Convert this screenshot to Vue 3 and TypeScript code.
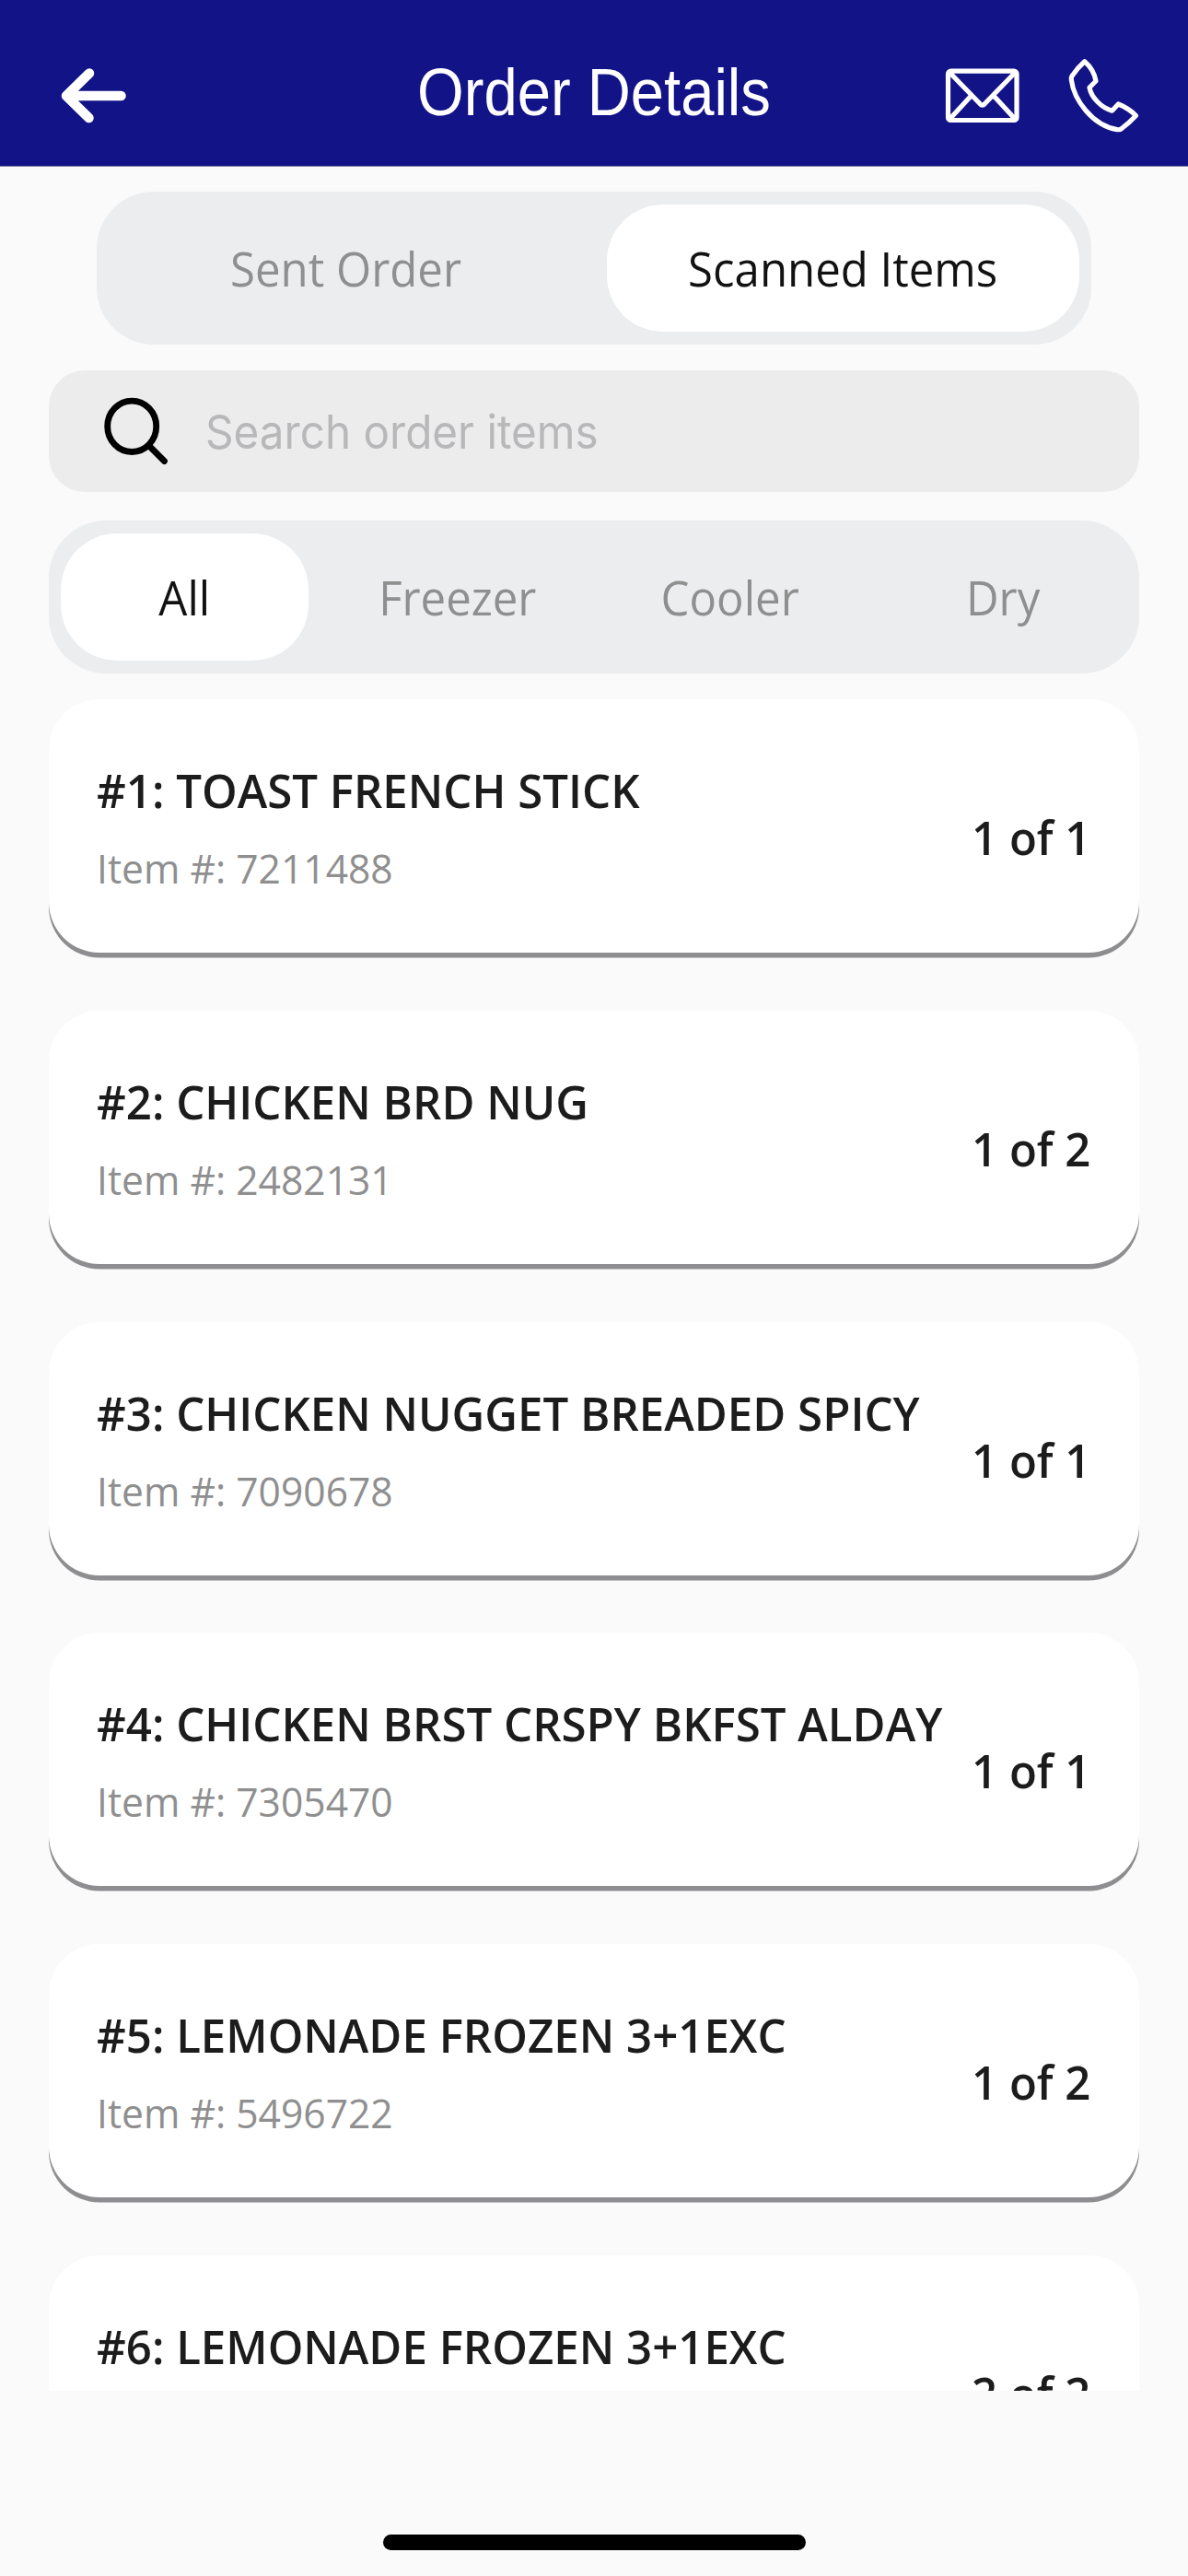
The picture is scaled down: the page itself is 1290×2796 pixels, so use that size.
<script setup lang="ts">
import { ref } from 'vue'

interface OrderItem {
  id: number
  name: string
  sku?: string
  scanned: number
  total: number
}

const views = ['Sent Order', 'Scanned Items']
const activeView = ref('Scanned Items')

const filters = ['All', 'Freezer', 'Cooler', 'Dry']
const activeFilter = ref('All')

const items: OrderItem[] = [
  { id: 1, name: 'TOAST FRENCH STICK', sku: '7211488', scanned: 1, total: 1 },
  { id: 2, name: 'CHICKEN BRD NUG', sku: '2482131', scanned: 1, total: 2 },
  { id: 3, name: 'CHICKEN NUGGET BREADED SPICY', sku: '7090678', scanned: 1, total: 1 },
  { id: 4, name: 'CHICKEN BRST CRSPY BKFST ALDAY', sku: '7305470', scanned: 1, total: 1 },
  { id: 5, name: 'LEMONADE FROZEN 3+1EXC', sku: '5496722', scanned: 1, total: 2 },
  { id: 6, name: 'LEMONADE FROZEN 3+1EXC', scanned: 2, total: 2 },
]
</script>

<template>
  <div class="screen">
    <header class="header">
      <svg class="back" width="80" height="70" viewBox="60 69 80 70">
        <path d="M131.5 104H72M97 79.500L72 104L96.500 128" />
      </svg>
      <h1 class="title">Order Details</h1>
      <div class="actions">
        <svg class="icon" width="84" height="90" viewBox="1025 59 84 90">
          <rect x="1029.500" y="77.200" width="74.500" height="53.300" rx="3" />
          <path d="M1030.500 78L1064 112.500Q1066.700 115.800 1069.400 112.500L1103 78M1031 129.500L1054.500 104M1102.500 129.500L1079 104" />
        </svg>
        <svg class="icon" width="80" height="90" viewBox="1158 59 80 90">
          <path d="M1177.700 66.700Q1170 73.500 1164 82.500Q1163 84 1163.400 87C1166 108 1186 136 1213 140.600Q1216 141.200 1218 139.500Q1226 133.500 1233.500 125.500C1228 120 1222 116 1214.300 113L1207.500 120.200C1196 117 1185 106 1183 95L1190 88C1188.500 79.500 1184 72 1177.700 66.700Z" />
        </svg>
      </div>
    </header>

    <nav class="segment views">
      <button
        v-for="view in views"
        :key="view"
        class="tab"
        :class="{ active: view === activeView }"
        @click="activeView = view"
      ><span class="label">{{ view }}</span></button>
    </nav>

    <div class="search">
      <svg width="80" height="80" viewBox="107 428 80 80">
        <ellipse cx="143.200" cy="462.800" rx="26.500" ry="27.700" />
        <path d="M163 485L178.500 500.500" />
      </svg>
      <span class="placeholder">Search order items</span>
    </div>

    <nav class="segment filters">
      <button
        v-for="filter in filters"
        :key="filter"
        class="tab"
        :class="{ active: filter === activeFilter }"
        @click="activeFilter = filter"
      ><span class="label">{{ filter }}</span></button>
    </nav>

    <main class="list">
      <article v-for="item in items" :key="item.id" class="card">
        <div class="info">
          <div class="name">#{{ item.id }}: {{ item.name }}</div>
          <div v-if="item.sku" class="sku">Item #: {{ item.sku }}</div>
        </div>
        <div class="qty">{{ item.scanned }} of {{ item.total }}</div>
      </article>
    </main>

    <footer class="footer"><div class="home"></div></footer>
  </div>
</template>

<style>
body {
  background: #fafafa;
}
</style>

<style scoped>
.screen {
  display: flex;
  flex-direction: column;
  width: 1290px;
  height: 2796px;
  overflow: hidden;
  background: #fafafa;
  font-family: 'Open Sans', 'Noto Sans', sans-serif;
}
.header {
  flex: none;
  display: grid;
  grid-template-columns: 300px 1fr 300px;
  align-items: center;
  box-sizing: border-box;
  height: 181px;
  padding-top: 28px;
  border-bottom: 1px solid #8182a8;
  background: #131388;
  background-clip: padding-box;
}
.back {
  margin-left: 60px;
  fill: none;
  stroke: #fff;
  stroke-width: 10.500;
  stroke-linecap: round;
  stroke-linejoin: round;
}
.title {
  margin: -8px 0 0;
  color: #fff;
  font: 400 72px/80px 'Liberation Sans', Arial, sans-serif;
  text-align: center;
  white-space: nowrap;
  transform: scaleX(0.905);
}
.actions {
  display: flex;
  gap: 49px;
  margin-left: 35px;
}
.icon {
  fill: none;
  stroke: #fff;
  stroke-width: 5.200;
  stroke-linejoin: round;
}
.segment {
  flex: none;
  display: flex;
  box-sizing: border-box;
  height: 166px;
  border-radius: 62px;
  background: #ebedee;
}
.views {
  justify-content: space-between;
  margin: 27px 105px 0;
  padding: 14px 13px 14px 14px;
}
.filters {
  margin: 31px 53px 0;
  padding: 14px 13px;
  gap: 27px;
}
.tab {
  flex: 1;
  padding: 0;
  border: 0;
  border-radius: 61px;
  background: transparent;
  color: #8f8f8f;
  font: 400 51.500px/70px 'Open Sans', sans-serif;
  white-space: nowrap;
}
.tab.active {
  background: #fff;
  color: #121212;
}
.views .tab {
  flex: 0 0 513px;
}
.label {
  display: inline-block;
  transform: scaleX(0.954);
}
.search {
  flex: none;
  display: flex;
  align-items: center;
  box-sizing: border-box;
  height: 132px;
  margin: 28px 53px 0;
  padding-left: 54px;
  border-radius: 39px;
  background: #ececec;
}
.search svg {
  fill: none;
  stroke: #000;
  stroke-width: 6.800;
  stroke-linecap: round;
}
.placeholder {
  margin: 2px 0 0 36px;
  color: #b8b8ba;
  font: 400 51px/70px Inter, sans-serif;
  white-space: nowrap;
  transform: scaleX(0.934);
  transform-origin: left center;
}
.list {
  flex: none;
  display: flex;
  flex-direction: column;
  gap: 62.800px;
  height: 1836px;
  margin-top: 28px;
  padding: 0 53px;
  overflow: hidden;
}
.card {
  flex: none;
  display: flex;
  box-sizing: border-box;
  height: 275px;
  padding: 68px 53px 0 52px;
  border-radius: 55px;
  background: #fff;
  box-shadow: 0 5.500px 0 #8e8e91;
  white-space: nowrap;
}
.info {
  flex: 1;
  min-width: 0;
}
.name {
  color: #1c1c1c;
  font-size: 51.400px;
  font-weight: 600;
  line-height: 60px;
  transform: scaleX(0.957);
  transform-origin: left center;
}
.sku {
  margin-top: 25px;
  color: #8f8f8f;
  font-size: 44.500px;
  line-height: 60px;
  transform: scaleX(0.957);
  transform-origin: left center;
}
.qty {
  flex: none;
  margin-top: 51px;
  color: #1c1c1c;
  font-size: 51.400px;
  font-weight: 600;
  line-height: 60px;
  transform: scaleX(0.955);
  transform-origin: right center;
}
.footer {
  display: flex;
  justify-content: center;
  padding-top: 156px;
}
.home {
  width: 459px;
  height: 17px;
  border-radius: 9px;
  background: #000;
}
</style>
